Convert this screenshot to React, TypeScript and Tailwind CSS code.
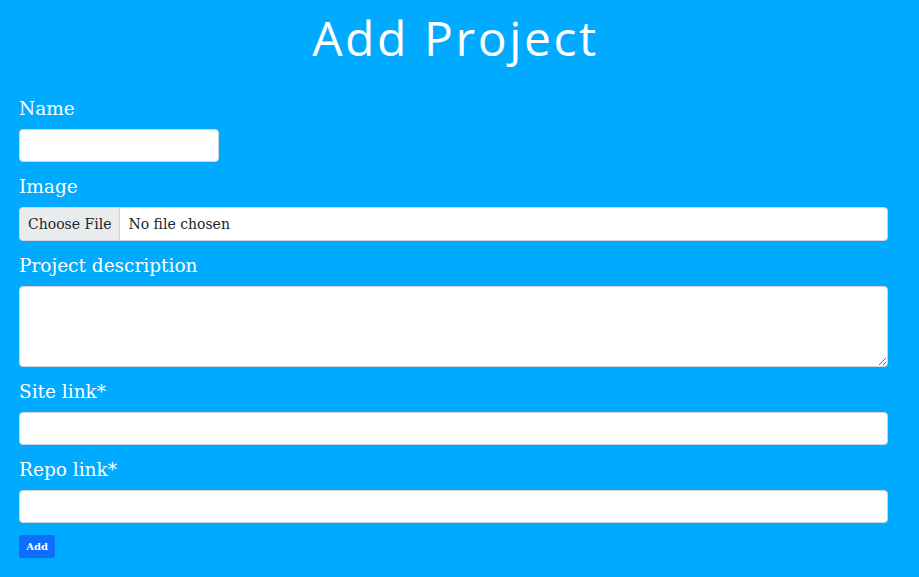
import React, { useState } from 'react';

const labelCls = "block text-[18.5px] leading-[30px] text-white mb-[5px]";
const inputCls = "block w-[869px] h-[33px] bg-white border border-[#ced4da] rounded-[4px] px-3 text-base text-[#212529] outline-none";

export default function App() {
  const [name, setName] = useState('');
  const [description, setDescription] = useState('');
  const [siteLink, setSiteLink] = useState('');
  const [repoLink, setRepoLink] = useState('');

  return (
    <div className="min-h-[577px] w-full bg-[#00aaff] pb-5" style={{ fontFamily: '"DejaVu Serif", serif' }}>
      <h1
        className="text-center text-white text-[48px] leading-[56px] pt-[10px] pb-[28px] pr-[8px] tracking-[2.6px]"
        style={{ fontFamily: '"Open Sans", sans-serif' }}
      >
        Add Project
      </h1>
      <form className="px-[19px]" onSubmit={(e) => e.preventDefault()}>
        <div>
          <label htmlFor="name" className={labelCls}>Name</label>
          <input
            id="name"
            type="text"
            value={name}
            onChange={(e) => setName(e.target.value)}
            className="block w-[200px] h-[33px] bg-white border border-[#ced4da] rounded-[4px] px-3 outline-none"
          />
        </div>
        <div className="mt-[10px]">
          <label htmlFor="image" className={labelCls}>Image</label>
          <input
            id="image"
            type="file"
            className="block w-[869px] h-[34px] bg-white border border-[#ced4da] rounded-[4px] text-[14px] text-[#212529] overflow-hidden file:h-full file:bg-[#e9ecef] file:text-[#212529] file:border-0 file:border-r file:border-solid file:border-[#ced4da] file:px-2 file:mr-2 file:text-[14px] file:font-[inherit]"
          />
        </div>
        <div className="mt-[10px]">
          <label htmlFor="description" className={labelCls}>Project description</label>
          <textarea
            id="description"
            value={description}
            onChange={(e) => setDescription(e.target.value)}
            className="block w-[869px] h-[81px] bg-white border border-[#ced4da] rounded-[4px] px-3 py-1 outline-none"
          />
        </div>
        <div className="mt-[10px]">
          <label htmlFor="site" className={labelCls}>Site link*</label>
          <input
            id="site"
            type="text"
            value={siteLink}
            onChange={(e) => setSiteLink(e.target.value)}
            className={inputCls}
          />
        </div>
        <div className="mt-[10px]">
          <label htmlFor="repo" className={labelCls}>Repo link*</label>
          <input
            id="repo"
            type="text"
            value={repoLink}
            onChange={(e) => setRepoLink(e.target.value)}
            className={inputCls}
          />
        </div>
        <button
          type="submit"
          className="mt-[12px] block w-[36px] h-[23px] bg-[#0d6efd] text-white text-[10px] font-bold rounded-[3px]"
        >
          Add
        </button>
      </form>
    </div>
  );
}
